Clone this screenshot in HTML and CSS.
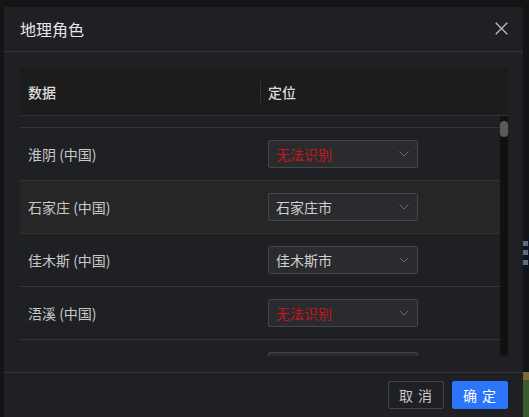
FILE: index.html
```html
<!DOCTYPE html>
<html lang="zh">
<head>
<meta charset="utf-8">
<title>地理角色</title>
<link rel="stylesheet" href="styles.css">
</head>
<body>
<div class="backdrop-strip"><i></i><i></i><i></i></div>
<div class="backdrop-block"></div>
<div class="dialog">
  <div class="dialog-header">
    <div class="dialog-title">地理角色</div>
    <button class="close" aria-label="关闭">
      <svg width="13" height="13" viewBox="0 0 13 13"><path d="M0.7 0.7L12.3 12.3M12.3 0.7L0.7 12.3" stroke="#bdbdbd" stroke-width="1.3" fill="none"/></svg>
    </button>
  </div>
  <div class="dialog-body">
    <div class="table">
      <div class="thead">
        <div class="th col1">数据</div>
        <div class="th col2"><span class="divider"></span>定位</div>
      </div>
      <div class="tbody-wrap">
        <div class="tbody">
          <div class="row partial"></div>
          <div class="row">
            <div class="td col1">淮阴 (中国)</div>
            <div class="td col2"><div class="select error"><span>无法识别</span><svg class="arrow" width="10" height="6" viewBox="0 0 10 6"><path d="M0.5 0.5L5 5L9.5 0.5" stroke="#6a6a6a" stroke-width="1" fill="none"/></svg></div></div>
          </div>
          <div class="row hover">
            <div class="td col1">石家庄 (中国)</div>
            <div class="td col2"><div class="select"><span>石家庄市</span><svg class="arrow" width="10" height="6" viewBox="0 0 10 6"><path d="M0.5 0.5L5 5L9.5 0.5" stroke="#6a6a6a" stroke-width="1" fill="none"/></svg></div></div>
          </div>
          <div class="row">
            <div class="td col1">佳木斯 (中国)</div>
            <div class="td col2"><div class="select"><span>佳木斯市</span><svg class="arrow" width="10" height="6" viewBox="0 0 10 6"><path d="M0.5 0.5L5 5L9.5 0.5" stroke="#6a6a6a" stroke-width="1" fill="none"/></svg></div></div>
          </div>
          <div class="row">
            <div class="td col1">浯溪 (中国)</div>
            <div class="td col2"><div class="select error"><span>无法识别</span><svg class="arrow" width="10" height="6" viewBox="0 0 10 6"><path d="M0.5 0.5L5 5L9.5 0.5" stroke="#6a6a6a" stroke-width="1" fill="none"/></svg></div></div>
          </div>
          <div class="row">
            <div class="td col1">&nbsp;</div>
            <div class="td col2"><div class="select"><span>&nbsp;</span></div></div>
          </div>
        </div>
        <div class="scrollbar"><div class="thumb"></div></div>
      </div>
    </div>
  </div>
  <div class="dialog-footer">
    <button class="btn cancel">取 消</button>
    <button class="btn primary">确 定</button>
  </div>
</div>
</body>
</html>
```
FILE: styles.css
```css
* { box-sizing: border-box; }
html, body { margin: 0; height: 100%; }
body {
  background: #141414;
  font-family: "Noto Sans CJK SC", "Liberation Sans", sans-serif;
  overflow: hidden;
  padding: 7px 6px 0 4px;
  position: relative;
}
.backdrop-strip {
  position: absolute;
  right: 0;
  top: 236px;
  width: 6px;
  height: 34px;
  background: #0e1522;
  display: flex;
  flex-direction: column;
  justify-content: space-around;
  padding: 3px 1px 3px 0;
}
.backdrop-strip i {
  display: block;
  height: 5px;
  background: #5f6c80;
}
.backdrop-block {
  position: absolute;
  right: 0;
  top: 372px;
  width: 6px;
  height: 45px;
  background: linear-gradient(#7a6a3a 0, #7a6a3a 8px, #3e5a2c 8px, #3b5a2a 100%);
}
.dialog {
  position: relative;
  width: 519px;
  height: 440px;
  background: #1f2023;
  display: flex;
  flex-direction: column;
}
.dialog-header {
  height: 45px;
  border-bottom: 1px solid #333436;
  display: flex;
  align-items: center;
  justify-content: space-between;
  padding: 0 15px 0 16px;
  flex: none;
}
.dialog-title {
  color: #e6e6e6;
  font-size: 16px;
  line-height: 20px;
  margin-top: -1px;
}
.close {
  background: none;
  border: 0;
  padding: 0;
  width: 13px;
  height: 13px;
  display: flex;
  align-items: center;
  justify-content: center;
  margin-top: -1px;
}
.dialog-body {
  padding: 16px 15px 0 16px;
  flex: none;
}
.table {
  width: 488px;
}
.thead {
  height: 48px;
  background: #1c1c1c;
  border-bottom: 1px solid #333436;
  display: flex;
}
.th {
  color: #dcdcdc;
  font-size: 14px;
  font-weight: 500;
  display: flex;
  align-items: center;
  padding-left: 8px;
  position: relative;
}
.col1 { width: 240px; flex: none; }
.col2 { flex: 1; }
.divider {
  position: absolute;
  left: 0;
  top: 13px;
  height: 22px;
  width: 1px;
  background: #333436;
}
.tbody-wrap {
  height: 240px;
  display: flex;
  overflow: hidden;
}
.tbody {
  width: 480px;
  flex: none;
}
.row {
  height: 53px;
  border-bottom: 1px solid #333436;
  display: flex;
  align-items: center;
}
.row.partial { height: 12px; }
.row.hover { background: #262626; }
.td {
  color: #c8c8c8;
  font-size: 14px;
  padding-left: 8px;
  display: flex;
  align-items: center;
}
.select {
  width: 150px;
  height: 28px;
  background: #2a2b2f;
  border: 1px solid #44464a;
  border-radius: 2px;
  display: flex;
  align-items: center;
  justify-content: space-between;
  padding: 0 8px 0 7px;
  color: #d0d0d0;
  font-size: 14px;
}
.select.error { color: #c4161c; }
.arrow { flex: none; }
.scrollbar {
  width: 8px;
  height: 240px;
  background: #111111;
  border-radius: 0 0 4px 4px;
  padding-top: 5px;
  flex: none;
}
.thumb {
  width: 8px;
  height: 16px;
  border-radius: 4px;
  background: #5a5a5a;
}
.dialog-footer {
  margin-top: 16px;
  border-top: 1px solid #333436;
  display: flex;
  justify-content: flex-end;
  gap: 8px;
  padding: 8px 15px 0 0;
  flex: none;
}
.btn {
  width: 56px;
  height: 28px;
  font-family: "Noto Sans CJK SC", sans-serif;
  font-size: 14px;
  border-radius: 2px;
  padding: 0;
  display: flex;
  align-items: center;
  justify-content: center;
  letter-spacing: 1px;
}
.cancel {
  background: transparent;
  border: 1px solid #444549;
  color: #c8c8c8;
}
.primary {
  background: #2b75fb;
  border: 1px solid #2b75fb;
  color: #ffffff;
}
```
